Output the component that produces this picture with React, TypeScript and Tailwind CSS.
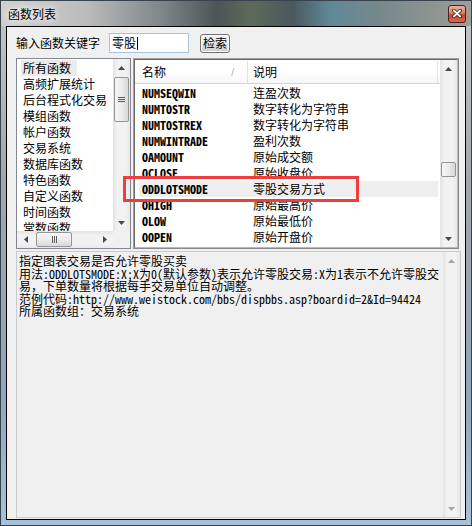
import React from "react";

const groups = [
  "所有函数",
  "高频扩展统计",
  "后台程式化交易",
  "模组函数",
  "帐户函数",
  "交易系统",
  "数据库函数",
  "特色函数",
  "自定义函数",
  "时间函数",
  "常数函数",
];

const rows = [
  ["NUMSEQWIN", "连盈次数"],
  ["NUMTOSTR", "数字转化为字符串"],
  ["NUMTOSTREX", "数字转化为字符串"],
  ["NUMWINTRADE", "盈利次数"],
  ["OAMOUNT", "原始成交额"],
  ["OCLOSE", "原始收盘价"],
  ["ODDLOTSMODE", "零股交易方式"],
  ["OHIGH", "原始最高价"],
  ["OLOW", "原始最低价"],
  ["OOPEN", "原始开盘价"],
];

const helpLines = [
  "指定图表交易是否允许零股买卖",
  "用法:ODDLOTSMODE:X;X为0(默认参数)表示允许零股交易:X为1表示不允许零股交",
  "易，下单数量将根据每手交易单位自动调整。",
  "范例代码:http://www.weistock.com/bbs/dispbbs.asp?boardid=2&Id=94424",
  "所属函数组：交易系统",
];

function Arrow({ dir, dim }: { dir: "up" | "down" | "left" | "right"; dim?: boolean }) {
  const fill = dim ? "#a8a8a8" : "#4a4a4a";
  if (dir === "up" || dir === "down") {
    return (
      <svg width="7" height="4" viewBox="0 0 7 4">
        <polygon points={dir === "up" ? "0,4 3.5,0 7,4" : "0,0 7,0 3.5,4"} fill={fill} />
      </svg>
    );
  }
  return (
    <svg width="4" height="7" viewBox="0 0 4 7">
      <polygon points={dir === "left" ? "4,0 4,7 0,3.5" : "0,0 4,3.5 0,7"} fill={fill} />
    </svg>
  );
}

function VScroll({ thumb, grip, dim }: { thumb?: string; grip?: boolean; dim?: boolean }) {
  return (
    <div className="flex w-[17px] shrink-0 flex-col bg-[linear-gradient(to_right,#e3e3e3,#f2f2f2_25%,#f2f2f2_75%,#e8e8e8)]">
      <div className="flex h-[17px] shrink-0 items-center justify-center">
        <Arrow dir="up" dim={dim} />
      </div>
      <div className="min-h-0 flex-1">
        {thumb ? (
          <div
            className={`mx-[1px] flex items-center justify-center rounded-[2px] border border-[#959595] bg-[linear-gradient(to_right,#f6f6f6,#ececec_50%,#d9d9d9)] ${thumb}`}
          >
            {grip ? (
              <div className="flex flex-col gap-[1px]">
                <div className="h-px w-[7px] bg-[#5c5c5c]" />
                <div className="h-px w-[7px] bg-[#5c5c5c]" />
                <div className="h-px w-[7px] bg-[#5c5c5c]" />
              </div>
            ) : null}
          </div>
        ) : null}
      </div>
      <div className="flex h-[17px] shrink-0 items-center justify-center">
        <Arrow dir="down" dim={dim} />
      </div>
    </div>
  );
}

function CloseGlyph() {
  return (
    <svg width="10" height="9" viewBox="0 0 10 9">
      <path d="M1.8 1.5 L8.2 7.5 M8.2 1.5 L1.8 7.5" stroke="#40160e" strokeWidth="3.4" strokeLinecap="round" />
      <path d="M1.8 1.5 L8.2 7.5 M8.2 1.5 L1.8 7.5" stroke="#ffffff" strokeWidth="1.8" strokeLinecap="round" />
    </svg>
  );
}

export default function App() {
  return (
    <div className="relative flex h-[526px] w-[472px] flex-col overflow-hidden border border-[#38424c] bg-[linear-gradient(to_bottom,#c6c6c6,#a2a6aa_35%,#8ea6bc_75%,#a6c2da)] font-['Noto_Sans_CJK_SC',sans-serif] text-[12px] text-black">
      {/* title bar */}
      <div className="flex h-[25px] shrink-0 items-center justify-between bg-[linear-gradient(to_right,#d0d0d0,#bcbcbc_18%,#80868a_34%,#4c5456_46%,#5d6a5a_53%,#4b585e_62%,#5f8898_70%,#76888c_80%,#8e948f_92%,#9c9e9a)] pl-[7px] pr-[5px]">
        <span className="leading-[14px] [text-shadow:0_0_6px_#ffffff,0_0_10px_#ffffff]">函数列表</span>
        <div className="flex h-[18px] w-[18px] items-center justify-center rounded-[3px] border border-[#4e2218] bg-[linear-gradient(to_bottom,#eab0a0,#d8806a_45%,#c4462e_55%,#d86a50)]">
          <CloseGlyph />
        </div>
      </div>

      {/* client */}
      <div className="flex min-h-0 flex-1 px-[5px] pb-[5px]">
        <div className="flex flex-1 flex-col border border-black bg-[#f0f0f0] pl-[9px]">
          {/* search row */}
          <div className="mt-[6px] flex h-[20px] items-center">
            <span className="w-[84px] leading-[14px]">输入函数关键字</span>
            <div className="ml-[9px] flex h-[20px] w-[80px] items-center border border-[#a9c3e3] bg-white pl-[2px]">
              <span className="leading-[14px]">零股</span>
              <div className="ml-[1px] h-[13px] w-px bg-black" />
            </div>
            <div className="ml-[11px] flex h-[19px] w-[30px] items-center justify-center rounded-[3px] border border-[#707070] bg-[linear-gradient(to_bottom,#f2f2f2,#ebebeb_50%,#dddddd_50%,#cfcfcf)] shadow-[inset_0_0_0_1px_#fcfcfc]">
              <span className="leading-[14px]">检索</span>
            </div>
          </div>

          {/* lists */}
          <div className="mt-[5px] flex h-[191px] gap-[2px]">
            {/* left group list */}
            <div className="flex w-[115px] flex-col border border-[#828790] bg-white">
              <div className="flex min-h-0 flex-1">
                <div className="min-w-0 flex-1 overflow-hidden pt-[1px]">
                  {groups.map((g, i) => (
                    <div key={g} className="flex h-[16px] items-center pl-[4px]">
                      <span
                        className={`whitespace-nowrap pl-[2px] pr-[6px] leading-[16px] ${i === 0 ? "bg-[#ebebeb]" : ""}`}
                      >
                        {g}
                      </span>
                    </div>
                  ))}
                </div>
                <VScroll thumb="mt-[1px] h-[45px]" grip />
              </div>
              <div className="flex h-[17px] shrink-0">
                <div className="flex flex-1 bg-[linear-gradient(to_bottom,#e3e3e3,#f2f2f2_25%,#f2f2f2_75%,#e8e8e8)]">
                  <div className="flex w-[17px] items-center justify-center">
                    <Arrow dir="left" />
                  </div>
                  <div className="flex-1 py-[1px]">
                    <div className="ml-[2px] flex h-full w-[36px] items-center justify-center gap-[1px] rounded-[2px] border border-[#959595] bg-[linear-gradient(to_bottom,#f6f6f6,#ececec_50%,#d9d9d9)]">
                      <div className="h-[7px] w-px bg-[#5c5c5c]" />
                      <div className="h-[7px] w-px bg-[#5c5c5c]" />
                      <div className="h-[7px] w-px bg-[#5c5c5c]" />
                    </div>
                  </div>
                  <div className="flex w-[17px] items-center justify-center">
                    <Arrow dir="right" />
                  </div>
                </div>
                <div className="w-[17px] bg-[#f0f0f0]" />
              </div>
            </div>

            {/* function list view */}
            <div className="flex w-[326px] border border-[#a0a0a0] border-r-[#8a8a8a] border-b-[#8a8a8a] bg-white">
              <div className="flex flex-1 border border-[#696969] border-r-[#b8b8b8] border-b-[#b8b8b8]">
                <div className="min-w-0 flex-1 overflow-hidden">
                  <div className="flex h-[24px] border-b border-[#d5d5d5] bg-[linear-gradient(to_bottom,#ffffff,#ffffff_50%,#f6f7f9)] pt-[1px]">
                    <div className="flex w-[113px] items-center justify-between border-r border-[#dfe3e8] pl-[7px] pr-[13px]">
                      <span className="leading-[14px]">名称</span>
                      <span className="font-['Liberation_Sans',sans-serif] text-[10px] text-[#b0b0b0]">/</span>
                    </div>
                    <div className="flex w-[190px] items-center border-r border-[#dfe3e8] pl-[5px]">
                      <span className="leading-[14px]">说明</span>
                    </div>
                  </div>
                  <div className="pt-[1px]">
                    {rows.map(([name, desc]) => (
                      <div
                        key={name}
                        className={`ml-[4px] mr-[2px] flex h-[16px] items-center ${name === "ODDLOTSMODE" ? "bg-[#efefef]" : ""}`}
                      >
                        <span className="w-[109px] pl-[3px] font-['Noto_Sans_Mono_CJK_SC','Liberation_Mono',monospace] text-[12px] font-bold leading-[16px]">
                          {name}
                        </span>
                        <span className="pl-[5px] leading-[16px]">{desc}</span>
                      </div>
                    ))}
                  </div>
                </div>
                <VScroll thumb="mt-[85px] h-[15px]" />
              </div>
            </div>
          </div>

          {/* help text */}
          <div className="mt-[2px] flex h-[267px] w-[445px] border border-[#c9cbd1] bg-[#f0f0f0]">
            <div className="min-w-0 flex-1 overflow-hidden pl-[2px] pt-[3px] font-['Noto_Sans_Mono_CJK_SC','Noto_Sans_CJK_SC',monospace] leading-[12.5px]">
              {helpLines.map((l) => (
                <div key={l} className="whitespace-nowrap">
                  {l}
                </div>
              ))}
            </div>
            <VScroll dim />
          </div>
        </div>
      </div>

      {/* highlight annotation */}
      <div className="absolute left-[122px] top-[175px] h-[26px] w-[236px] border-[3px] border-[#f23c3c]" />
    </div>
  );
}
